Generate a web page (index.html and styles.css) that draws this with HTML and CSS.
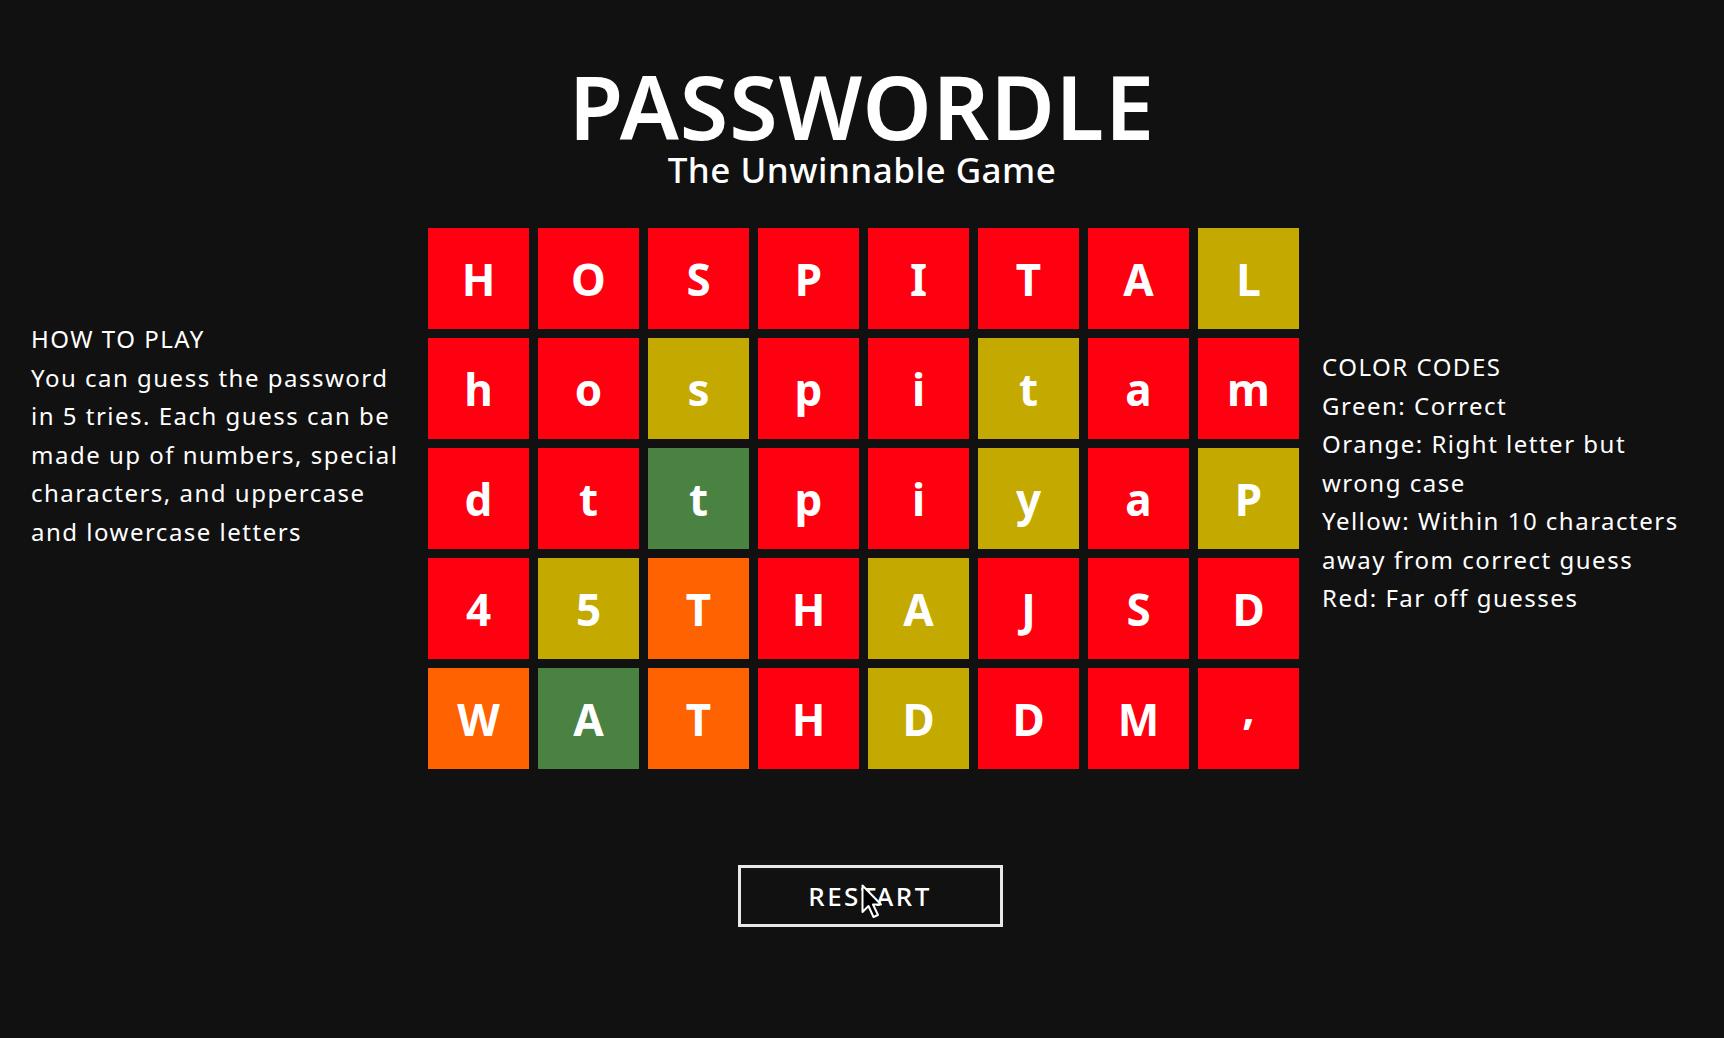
FILE: index.html
```html
<!DOCTYPE html>
<html lang="en">
<head>
<meta charset="utf-8">
<title>Passwordle</title>
<link rel="stylesheet" href="styles.css">
</head>
<body>
<div class="app">
  <header class="header">
    <h1 class="title">PASSWORDLE</h1>
    <p class="subtitle">The Unwinnable Game</p>
  </header>
  <main class="main">
    <section class="side side-left">
      <h2 class="side-title">HOW TO PLAY</h2>
      <p class="side-text">You can guess the password in 5 tries. Each guess can be made up of numbers, special characters, and uppercase and lowercase letters</p>
    </section>
    <div class="board">
      <div class="tile red">H</div><div class="tile red">O</div><div class="tile red">S</div><div class="tile red">P</div><div class="tile red">I</div><div class="tile red">T</div><div class="tile red">A</div><div class="tile yellow">L</div>
      <div class="tile red">h</div><div class="tile red">o</div><div class="tile yellow">s</div><div class="tile red">p</div><div class="tile red">i</div><div class="tile yellow">t</div><div class="tile red">a</div><div class="tile red">m</div>
      <div class="tile red">d</div><div class="tile red">t</div><div class="tile green">t</div><div class="tile red">p</div><div class="tile red">i</div><div class="tile yellow">y</div><div class="tile red">a</div><div class="tile yellow">P</div>
      <div class="tile red">4</div><div class="tile yellow">5</div><div class="tile orange">T</div><div class="tile red">H</div><div class="tile yellow">A</div><div class="tile red">J</div><div class="tile red">S</div><div class="tile red">D</div>
      <div class="tile orange">W</div><div class="tile green">A</div><div class="tile orange">T</div><div class="tile red">H</div><div class="tile yellow">D</div><div class="tile red">D</div><div class="tile red">M</div><div class="tile red comma">,</div>
    </div>
    <section class="side side-right">
      <h2 class="side-title">COLOR CODES</h2>
      <p class="side-text">Green: Correct</p>
      <p class="side-text">Orange: Right letter but wrong case</p>
      <p class="side-text">Yellow: Within 10 characters away from correct guess</p>
      <p class="side-text">Red: Far off guesses</p>
    </section>
  </main>
  <div class="actions">
    <button class="restart" type="button">RESTART
      <svg class="cursor" width="24" height="36" viewBox="0 0 24 36" aria-hidden="true">
        <path d="M1.5 1.5 L1.5 28 L7.5 22 L12.5 33 L17 31 L12 20.5 L20 20.5 Z" fill="#000" stroke="#fff" stroke-width="2" stroke-linejoin="round"/>
      </svg>
    </button>
  </div>
</div>
</body>
</html>
```

FILE: styles.css
```css
* { box-sizing: border-box; }

html, body {
  margin: 0;
  padding: 0;
  background: #111111;
  color: #ffffff;
  font-family: "Noto Sans", "Open Sans", sans-serif;
}

.app {
  width: 1724px;
  min-height: 1038px;
}

.header {
  padding-top: 62px;
  text-align: center;
}

.title {
  margin: 0;
  font-size: 88px;
  line-height: 1;
  font-weight: 600;
  letter-spacing: 1px;
}

.subtitle {
  margin: 2px 0 0;
  font-size: 35px;
  line-height: 1;
  font-weight: 500;
  letter-spacing: 0.5px;
}

.main {
  display: flex;
  align-items: flex-start;
  justify-content: flex-start;
  padding-left: 31px;
  margin-top: 41px;
}

.side {
  font-size: 24px;
  line-height: 38.5px;
  letter-spacing: 1.5px;
}

.side-left {
  width: 374px;
  margin-right: 23px;
  padding-top: 92px;
}

.side-right {
  width: 371px;
  margin-left: 23px;
  padding-top: 120px;
}

.side-title {
  margin: 0;
  font-size: 24px;
  font-weight: 400;
  line-height: 38.5px;
}

.side-text {
  margin: 0;
}

.board {
  display: grid;
  grid-template-columns: repeat(8, 101px);
  grid-auto-rows: 101px;
  gap: 9px;
}

.tile {
  display: flex;
  align-items: center;
  justify-content: center;
  font-size: 44px;
  font-weight: 700;
  color: #ffffff;
}

.tile.comma {
  padding-bottom: 24px;
}

.red { background: #fe0010; }
.yellow { background: #c4aa00; }
.green { background: #4a8242; }
.orange { background: #ff6200; }

.actions {
  display: flex;
  justify-content: center;
  padding-left: 16px;
  margin-top: 96px;
}

.restart {
  position: relative;
  width: 265px;
  height: 62px;
  background: transparent;
  border: 3px solid #e8e8e8;
  color: #ffffff;
  font-family: "Noto Sans", "Open Sans", sans-serif;
  font-size: 26px;
  font-weight: 500;
  letter-spacing: 2.5px;
  padding: 0;
}

.cursor {
  position: absolute;
  left: 120px;
  top: 16px;
}
```
